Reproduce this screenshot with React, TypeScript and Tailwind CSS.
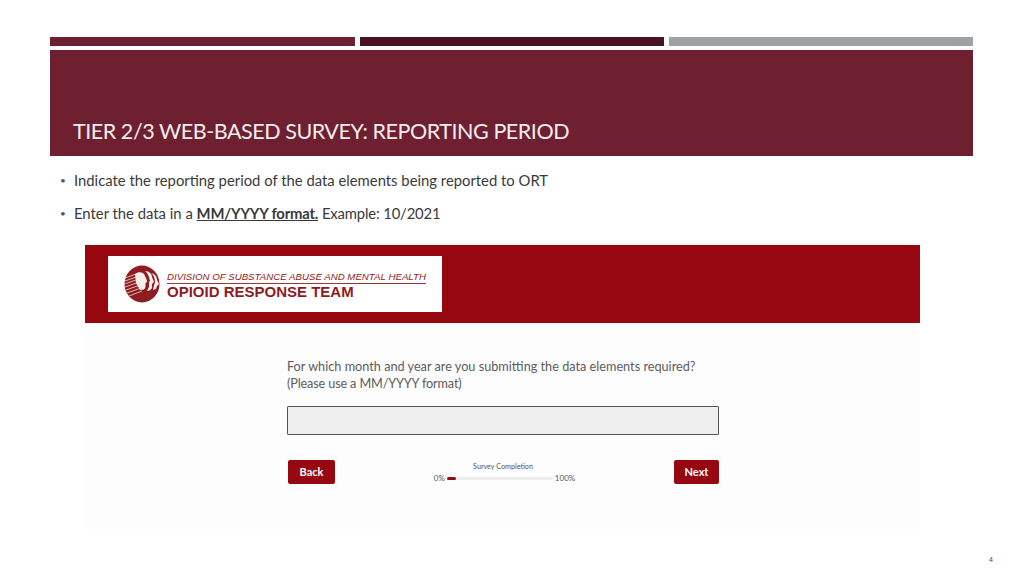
function LogoMark() {
  return (
    <svg width="36" height="38" viewBox="0 0 36 38" className="shrink-0">
      <ellipse cx="18" cy="19" rx="17.5" ry="18.5" fill="#8e1c20" />
      <path d="M1 13 L15 8 M1 16 L15 11 M0.5 19 L15 14 M1 22 L15 17 M2 25 L16 20 M3 28 L17 23 M5 31 L18 26" stroke="#e8c4c4" strokeWidth="0.9" />
      <path d="M11 9 C15 6 20 7 21 11 C22 13 23 15 23 17 L21.5 18 L21.5 22 C21 25 18 25 16 25 L12 18 Z" fill="#f7efee" />
      <path d="M21 6 C25 6 28 9 28 12 L30 17 L28 19 L28 23 C27 25 25 26 23 26 L25 22 L25 17 L26 16 C25 12 24 8 21 6 Z" fill="#f7efee" />
      <path d="M27 8 C31 9 33 12 33 15 L35 19 L33 21 L32 24 L29 25 L30 20 L31 18 C31 14 30 10 27 8 Z" fill="#f7efee" />
    </svg>
  );
}

export default function App() {
  return (
    <div className="w-[1024px] h-[576px] bg-white overflow-hidden flex flex-col pt-[37px] px-[50px] font-['Lato',sans-serif]">
      <div className="w-[923px] flex gap-[5px] h-[9px] shrink-0">
        <div className="w-[305px] bg-[#6e2033]" />
        <div className="w-[304px] bg-[#4a1325]" />
        <div className="flex-1 bg-[#9ea2a5]" />
      </div>

      <div className="w-[923px] h-[106px] mt-[4px] shrink-0 bg-[#6e2031] flex items-end pl-[23px] pb-[9px]">
        <h1 className="text-[21.5px] leading-[32px] text-[#f4eeee] tracking-[-0.45px] whitespace-nowrap">
          TIER 2/3 WEB-BASED SURVEY: REPORTING PERIOD
        </h1>
      </div>

      <ul className="mt-[14px] pl-[10px] flex flex-col gap-[13px] text-[14.83px] leading-[20px] text-[#3a3a3a] shrink-0">
        <li className="flex">
          <span className="w-[14px] text-[10px] text-[#555]">•</span>
          <span>Indicate the reporting period of the data elements being reported to ORT</span>
        </li>
        <li className="flex">
          <span className="w-[14px] text-[10px] text-[#555]">•</span>
          <span>
            Enter the data in a <b className="underline tracking-[-0.2px]">MM/YYYY format.</b>{" "}
            <span className="tracking-[-0.15px]">Example: 10/2021</span>
          </span>
        </li>
      </ul>

      <div className="ml-[35px] mt-[22px] w-[835px] h-[285px] shrink-0 bg-[#fdfdfd]">
        <div className="h-[78px] bg-[#96070f] pt-[11px] pl-[23px]">
          <div className="w-[334px] h-[56px] bg-white flex items-center gap-[7px] pl-[16px]">
            <LogoMark />
            <div className="flex flex-col pt-[2px] font-['Liberation_Sans',sans-serif] text-[#8e1c20]">
              <span className="italic text-[9.7px] leading-[12px] border-b border-[#a0353a] whitespace-nowrap">
                DIVISION OF SUBSTANCE ABUSE AND MENTAL HEALTH
              </span>
              <span className="font-bold text-[15px] leading-[16px] whitespace-nowrap">OPIOID RESPONSE TEAM</span>
            </div>
          </div>
        </div>

        <div className="ml-[202px] w-[432px] pt-[35px]">
          <p className="text-[12.7px] leading-[17px] text-[#5c5c5c] whitespace-nowrap">
            For which month and year are you submitting the data elements required?
            <br />
            <span className="tracking-[-0.15px]">(Please use a MM/YYYY format)</span>
          </p>
          <div className="mt-[14px] h-[29px] bg-[#efefef] border border-[#555] rounded-[1px]" />
          <div className="mt-[25px] h-[24px] flex items-center justify-between pl-[1px]">
            <button className="w-[47px] h-[24px] bg-[#96070f] rounded-[2px] text-white text-[11px] font-bold">Back</button>
            <div className="flex flex-col items-center pt-[2px]">
              <span className="text-[7.2px] leading-[9px] text-[#555] mr-[3px]">Survey Completion</span>
              <div className="flex items-center gap-[2px] mt-[1px] text-[8px] leading-[12px] text-[#555]">
                <span>0%</span>
                <div className="w-[106px] h-[3px] bg-[#ececec] rounded-full">
                  <div className="w-[9px] h-[3px] bg-[#96070f] rounded-full" />
                </div>
                <span>100%</span>
              </div>
            </div>
            <button className="w-[45px] h-[24px] bg-[#96070f] rounded-[2px] text-white text-[11px] font-bold">Next</button>
          </div>
        </div>
      </div>

      <div className="w-[943px] flex justify-end mt-[25px] text-[7px] leading-[10px] text-[#444] font-['Liberation_Sans',sans-serif]">4</div>
    </div>
  );
}
